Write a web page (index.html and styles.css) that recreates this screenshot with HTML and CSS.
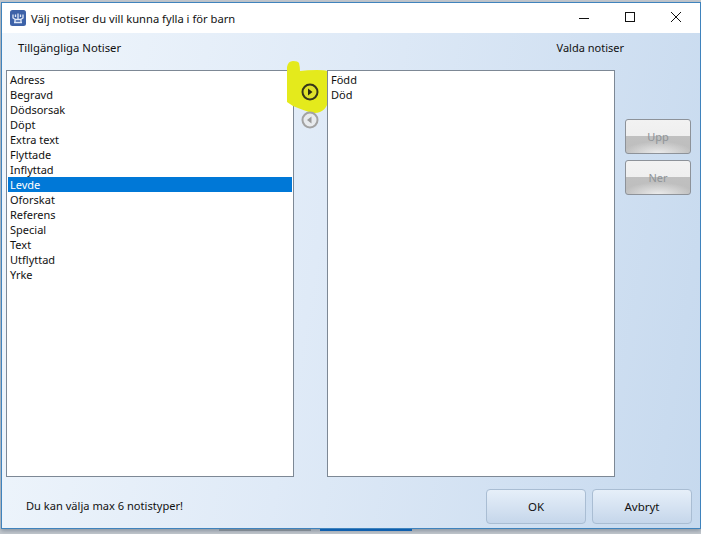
FILE: index.html
```html
<!DOCTYPE html>
<html lang="sv">
<head>
<meta charset="utf-8">
<title>Välj notiser</title>
<link rel="stylesheet" href="styles.css">
</head>
<body>
<div class="window">
  <header class="titlebar">
    <svg class="app-icon" viewBox="0 0 16 16" width="16" height="16">
      <rect width="16" height="16" rx="2.5" fill="#3d62a8"/>
      <path d="M3 4.500v3.500l2.500 1.500h5L13 8V4.500M8 3.500v6M5.500 4.500v2.500M10.500 4.500v2.500M5 9.500v3M11 9.500v3M4 12.500h8" fill="none" stroke="#dfe8f7" stroke-width="1.300"/>
    </svg>
    <span class="title">Välj notiser du vill kunna fylla i för barn</span>
    <div class="controls">
      <svg class="ctl" viewBox="0 0 46 30" width="46" height="30"><path d="M18 15.500h10" stroke="#111" fill="none"/></svg>
      <svg class="ctl" viewBox="0 0 46 30" width="46" height="30"><rect x="18.500" y="9.500" width="9" height="9" stroke="#111" fill="none"/></svg>
      <svg class="ctl" viewBox="0 0 46 30" width="46" height="30"><path d="M18 9l10 10M28 9L18 19" stroke="#111" fill="none"/></svg>
    </div>
  </header>
  <main class="content">
    <div class="labels">
      <span class="label-left">Tillgängliga Notiser</span>
      <span class="label-right">Valda notiser</span>
    </div>
    <div class="panes">
      <ul class="list">
        <li>Adress</li><li>Begravd</li><li>Dödsorsak</li><li>Döpt</li><li>Extra text</li>
        <li>Flyttade</li><li>Inflyttad</li><li class="selected">Levde</li><li>Oforskat</li>
        <li>Referens</li><li>Special</li><li>Text</li><li>Utflyttad</li><li>Yrke</li>
      </ul>
      <div class="arrows">
        <svg class="highlight" viewBox="0 0 40 53" width="40" height="53">
          <path d="M0 6Q1 0 6 0Q11 0 12 2Q13 6 13 10Q20 9 30 9Q37 9 40 10V44Q38 49 33 51Q28 53 22 51Q16 49 11 47Q5 45 0 41Z" fill="#e4ea1c"/>
        </svg>
        <svg class="arrow" viewBox="0 0 20 20" width="20" height="20">
          <circle cx="10" cy="10" r="7.500" fill="#dfe22a" stroke="#36361a" stroke-width="2"/>
          <path d="M8 6.500l4.500 3.500L8 13.500z" fill="#2a2a10"/>
        </svg>
        <svg class="arrow" viewBox="0 0 20 20" width="20" height="20">
          <circle cx="10" cy="10" r="7.500" fill="#e8ebee" stroke="#a3a3a3" stroke-width="2"/>
          <path d="M11.500 6.500L7 10l4.500 3.500z" fill="#9a9a9a"/>
        </svg>
      </div>
      <ul class="list">
        <li>Född</li><li>Död</li>
      </ul>
      <div class="move">
        <button class="btn-move" disabled>Upp</button>
        <button class="btn-move" disabled>Ner</button>
      </div>
    </div>
    <footer class="footer">
      <span class="hint">Du kan välja max 6 notistyper!</span>
      <div class="actions">
        <button class="btn">OK</button>
        <button class="btn">Avbryt</button>
      </div>
    </footer>
  </main>
</div>
<div class="taskbar">
  <span class="task task-grey"></span>
  <span class="task task-blue"></span>
</div>
</body>
</html>
```

FILE: styles.css
```css
* { box-sizing: border-box; }
html, body { margin: 0; height: 100%; }
body {
  width: 701px;
  height: 534px;
  overflow: hidden;
  background: #c3c8ce;
  font-family: "Noto Sans", "Open Sans", sans-serif;
  font-size: 11px;
  color: #111;
  padding-top: 2px;
}
.window {
  height: 527px;
  margin-left: 1px;
  border: 1px solid #3f83bd;
  display: flex;
  flex-direction: column;
  box-shadow: 0 2px 4px rgba(40, 60, 80, .35);
}
.titlebar {
  height: 30px;
  flex: none;
  background: #fff;
  display: flex;
  align-items: center;
  padding-left: 8px;
}
.app-icon { flex: none; margin-right: 5px; }
.title { font-size: 11.2px; }
.controls { margin-left: auto; display: flex; margin-right: 1px; }
.ctl { display: block; }
.content {
  flex: 1;
  min-height: 0;
  background: linear-gradient(100deg, #f0f6fc 0%, #dfeaf7 45%, #c6d9ee 100%);
  display: flex;
  flex-direction: column;
}
.labels {
  height: 37px;
  flex: none;
  display: flex;
  justify-content: space-between;
  padding: 7px 76px 0 16px;
  line-height: 15px;
}
.label-left { font-size: 11.3px; }
.panes {
  height: 407px;
  flex: none;
  display: flex;
  padding-left: 4px;
}
.list {
  position: relative;
  width: 288px;
  height: 100%;
  margin: 0;
  padding: 1px;
  list-style: none;
  background: #fff;
  border: 1px solid #7d8895;
  flex: none;
}
.list li {
  height: 15px;
  line-height: 15px;
  padding-left: 2px;
  white-space: nowrap;
}
.list li.selected { background: #0078d7; color: #fff; }
.arrows {
  position: relative;
  z-index: 1;
  width: 33px;
  flex: none;
  display: flex;
  flex-direction: column;
  align-items: center;
  padding: 12px 1px 0 0;
  gap: 8px;
}
.highlight { position: absolute; left: -7px; top: -9px; }
.arrow { position: relative; display: block; }
.move {
  flex: none;
  display: flex;
  flex-direction: column;
  gap: 6px;
  margin-left: 10px;
  padding-top: 49px;
}
.btn-move {
  width: 66px;
  height: 35px;
  border: 1px solid #8d9299;
  border-radius: 3px;
  padding: 0;
  font: inherit;
  color: #8f9498;
  background:
    radial-gradient(ellipse 55% 35% at 50% 100%, rgba(240, 240, 240, .9), rgba(240, 240, 240, 0)),
    linear-gradient(180deg, #f2f2f2 0%, #efefef 48%, #c0c0c0 50%, #bdbdbd 100%);
}
.footer {
  flex: 1;
  display: flex;
  justify-content: space-between;
  padding: 0 8px 0 24px;
  min-height: 0;
}
.hint { padding-top: 21px; line-height: 15px; font-size: 11.1px; }
.actions { display: flex; gap: 6px; padding-top: 12px; }
.btn {
  width: 100px;
  height: 35px;
  border: 1px solid #a9bdd3;
  border-radius: 4px;
  padding: 0;
  font: inherit;
  font-size: 11.5px;
  color: #111;
  background: linear-gradient(180deg, #e6eff9 0%, #d6e3f2 50%, #c5d6ea 100%);
}
.taskbar {
  height: 5px;
  display: flex;
  padding-left: 219px;
  gap: 9px;
}
.task { display: block; width: 92px; height: 2px; }
.task-grey { background: #7f8891; }
.task-blue { background: #0f5fae; }
```
